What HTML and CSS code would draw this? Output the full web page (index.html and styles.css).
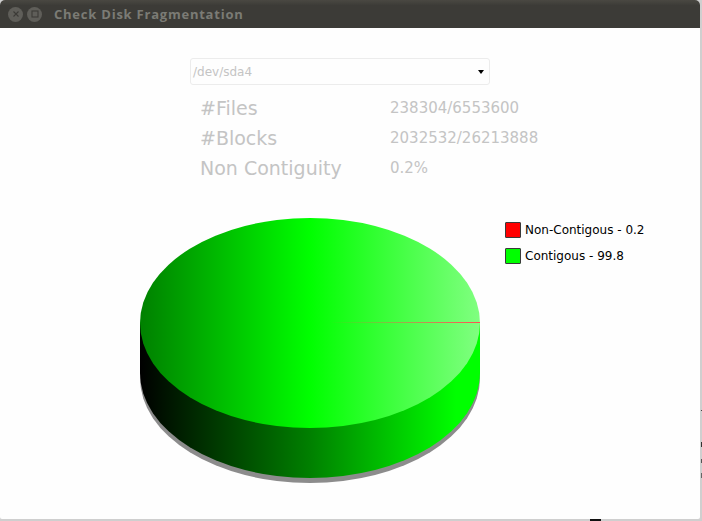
FILE: index.html
```html
<!DOCTYPE html>
<html lang="en">
<head>
  <meta charset="UTF-8">
  <title>Check Disk Fragmentation</title>
  <link rel="stylesheet" href="styles.css">
</head>
<body>
  <div class="window">
    <div class="titlebar">
      <span class="winbtn">
        <svg width="8" height="8" viewBox="0 0 8 8"><path d="M1.5 1.5L6.5 6.5M6.5 1.5L1.5 6.5" stroke="#3c3b37" stroke-width="1.1"/></svg>
      </span>
      <span class="winbtn">
        <svg width="8" height="8" viewBox="0 0 8 8"><rect x="1" y="1" width="6" height="6" fill="none" stroke="#3c3b37" stroke-width="1.1"/></svg>
      </span>
      <span class="wintitle">Check Disk Fragmentation</span>
    </div>

    <div class="content">
      <div class="select">
        <span>/dev/sda4</span>
        <span class="caret"></span>
      </div>

      <div class="stats">
        <div class="stat-label">#Files</div>
        <div class="stat-value">238304/6553600</div>
        <div class="stat-label">#Blocks</div>
        <div class="stat-value">2032532/26213888</div>
        <div class="stat-label">Non Contiguity</div>
        <div class="stat-value">0.2%</div>
      </div>

      <div class="chart">
        <svg class="pie" width="340" height="266" viewBox="140 218 340 266">
          <defs>
            <linearGradient id="topGrad" gradientUnits="userSpaceOnUse" x1="140" y1="0" x2="480" y2="0">
              <stop offset="0" stop-color="#008000"/>
              <stop offset="0.5" stop-color="#00ff00"/>
              <stop offset="1" stop-color="#80ff80"/>
            </linearGradient>
            <linearGradient id="sideGrad" gradientUnits="userSpaceOnUse" x1="140" y1="0" x2="480" y2="0">
              <stop offset="0" stop-color="#000000"/>
              <stop offset="0.5" stop-color="#008000"/>
              <stop offset="0.93" stop-color="#00ff00"/>
              <stop offset="1" stop-color="#00ff00"/>
            </linearGradient>
            <linearGradient id="sliceGrad" gradientUnits="userSpaceOnUse" x1="330" y1="0" x2="480" y2="0">
              <stop offset="0" stop-color="#ff5050" stop-opacity="0"/>
              <stop offset="1" stop-color="#ff5050"/>
            </linearGradient>
          </defs>
          <!-- shadow -->
          <path d="M140 328V378A170 105 0 0 0 480 378V328Z" fill="#8c8c8c"/>
          <!-- side -->
          <path d="M140 323V373A170 105 0 0 0 480 373V323Z" fill="url(#sideGrad)"/>
          <!-- top -->
          <ellipse cx="310" cy="323" rx="170" ry="105" fill="url(#topGrad)"/>
          <!-- small slice -->
          <path d="M330 322H480V323H330Z" fill="url(#sliceGrad)"/>
        </svg>

        <div class="legend">
          <div class="legend-row"><span class="swatch red"></span>Non-Contigous - 0.2</div>
          <div class="legend-row"><span class="swatch green"></span>Contigous - 99.8</div>
        </div>
      </div>
    </div>
  </div>
</body>
</html>
```

FILE: styles.css
```css
html, body {
  margin: 0;
  height: 100%;
}
body {
  background-color: #cfcfcf;
  /* bits of the desktop showing past the window edge */
  background-image:
    linear-gradient(#444, #444),
    linear-gradient(#333, #333),
    linear-gradient(#555, #555),
    linear-gradient(#666, #666),
    linear-gradient(#111, #111);
  background-repeat: no-repeat;
  background-size: 1px 1px, 1px 5px, 1px 4px, 1px 5px, 11px 2px;
  background-position: 701px 410px, 701px 442px, 701px 459px, 701px 473px, 590px 519px;
  font-family: "DejaVu Sans", sans-serif;
  overflow: hidden;
}
.window {
  width: 700px;
  height: 519px;
  display: flex;
  flex-direction: column;
  background-color: #fefefe;
  border-radius: 5px 5px 2px 2px;
}
.titlebar {
  height: 28px;
  flex: none;
  display: flex;
  align-items: center;
  padding-left: 8px;
  background: linear-gradient(#4a4842, #3c3b37 20%);
  border-radius: 5px 5px 0 0;
}
.winbtn {
  width: 15px;
  height: 15px;
  margin-right: 4px;
  border-radius: 50%;
  background-color: #5f5e59;
  display: flex;
  align-items: center;
  justify-content: center;
}
.wintitle {
  margin-left: 8px;
  font-family: "Open Sans", sans-serif;
  font-weight: 700;
  font-size: 13px;
  letter-spacing: 0.77px;
  color: #7b7b75;
}
.content {
  flex: 1;
  padding-top: 30px;
}
.select {
  width: 292px;
  height: 25px;
  margin-left: 190px;
  padding: 0 4px 0 2px;
  display: flex;
  align-items: center;
  justify-content: space-between;
  border: 1px solid #ececec;
  border-radius: 3px;
  font-size: 12px;
  color: #c4c4c4;
}
.caret {
  width: 0;
  height: 0;
  margin-right: 1px;
  border-left: 3.5px solid transparent;
  border-right: 3.5px solid transparent;
  border-top: 4px solid #000;
}
.stats {
  display: grid;
  grid-template-columns: 190px 1fr;
  grid-auto-rows: 30px;
  margin: 8px 0 0 200px;
  align-items: center;
  color: #c4c4c4;
}
.stat-label {
  font-size: 19px;
}
.stat-value {
  font-size: 15px;
}
.chart {
  display: flex;
  margin: 35px 0 0 140px;
}
.pie {
  display: block;
  flex: none;
}
.legend {
  margin: 4px 0 0 25px;
  font-size: 12px;
  color: #000;
}
.legend-row {
  display: flex;
  align-items: center;
  height: 16px;
  margin-bottom: 10px;
}
.swatch {
  flex: none;
  box-sizing: border-box;
  width: 16px;
  height: 16px;
  margin-right: 4px;
  border: 1.5px solid #3a3a3a;
  border-radius: 1px;
}
.red {
  background-color: #ff0000;
}
.green {
  background-color: #00ff00;
}
```
